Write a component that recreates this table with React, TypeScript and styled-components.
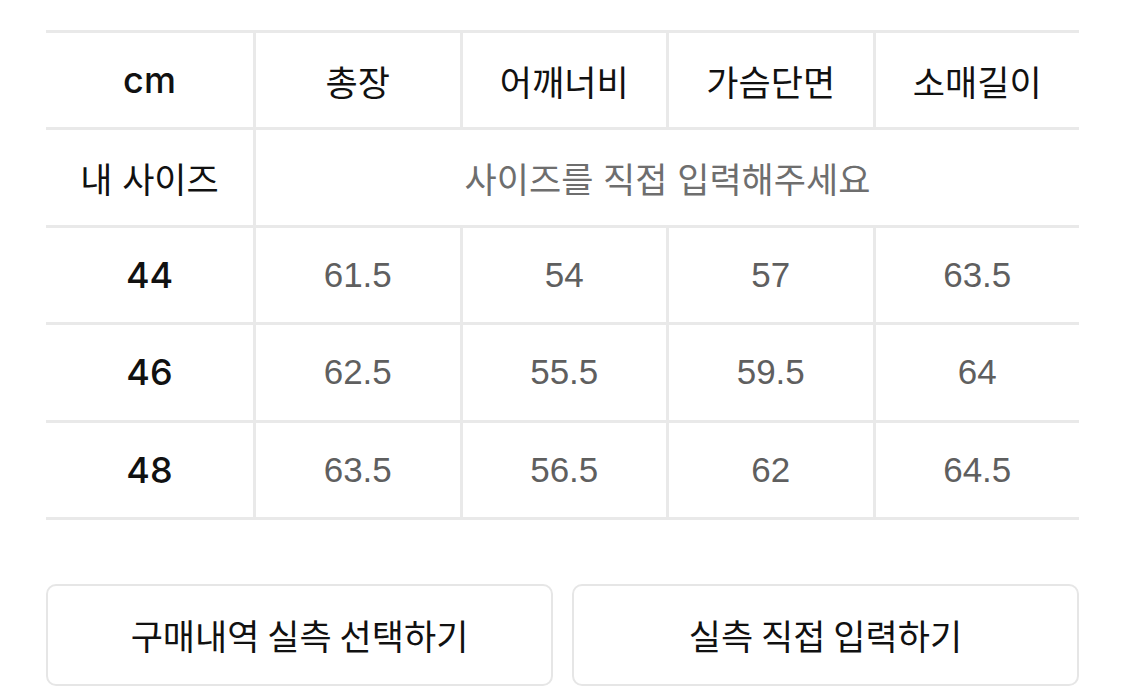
import React from "react";
import styled, { createGlobalStyle } from "styled-components";

const Global = createGlobalStyle`
  html, body { margin: 0; padding: 0; background: #ffffff; }
  body { font-family: "Liberation Sans", "Noto Sans CJK KR", sans-serif; }
`;

const Page = styled.div`
  width: 1125px;
  height: 691px;
  box-sizing: border-box;
  padding: 30px 46px 0 46px;
  display: flex;
  flex-direction: column;
  gap: 64px;
`;

const Table = styled.div`
  display: grid;
  grid-template-columns: 207px repeat(4, 1fr);
  grid-auto-rows: 94.4px;
  gap: 3px;
  padding: 3px 0;
  background: #e9e9e9;
`;

type Tone = "head" | "label" | "value" | "hint";

const Cell = styled.div<{ $span?: number; $tone?: Tone }>`
  background: #ffffff;
  display: flex;
  align-items: center;
  justify-content: center;
  grid-column: ${(p) => (p.$span ? `span ${p.$span}` : "auto")};
  font-family: ${(p) =>
    p.$tone === "label"
      ? `Inter, "Noto Sans CJK KR", sans-serif`
      : `"Liberation Sans", "Noto Sans CJK KR", sans-serif`};
  font-size: ${(p) => (p.$tone === "label" ? "36px" : "35px")};
  font-weight: ${(p) => (p.$tone === "label" ? 500 : 400)};
  color: ${(p) =>
    p.$tone === "value" ? "#5f5f5f" : p.$tone === "hint" ? "#6e6e6e" : "#111111"};
`;

const Buttons = styled.div`
  display: grid;
  grid-template-columns: 1fr 1fr;
  gap: 19px;
`;

const Button = styled.button`
  height: 102px;
  box-sizing: border-box;
  border: 2px solid #e6e6e6;
  border-radius: 10px;
  background: #ffffff;
  font-family: "Noto Sans CJK KR", sans-serif;
  font-size: 35px;
  font-weight: 400;
  color: #111111;
  padding: 0;
`;

const headers = ["총장", "어깨너비", "가슴단면", "소매길이"];
const rows: [string, string[]][] = [
  ["44", ["61.5", "54", "57", "63.5"]],
  ["46", ["62.5", "55.5", "59.5", "64"]],
  ["48", ["63.5", "56.5", "62", "64.5"]],
];

export default function App() {
  return (
    <>
      <Global />
      <Page>
        <Table>
          <Cell $tone="label">cm</Cell>
          {headers.map((h) => (
            <Cell key={h} $tone="head">
              {h}
            </Cell>
          ))}
          <Cell $tone="head">내 사이즈</Cell>
          <Cell $span={4} $tone="hint">
            사이즈를 직접 입력해주세요
          </Cell>
          {rows.map(([size, vals]) => (
            <React.Fragment key={size}>
              <Cell $tone="label">{size}</Cell>
              {vals.map((v, i) => (
                <Cell key={i} $tone="value">
                  {v}
                </Cell>
              ))}
            </React.Fragment>
          ))}
        </Table>
        <Buttons>
          <Button>구매내역 실측 선택하기</Button>
          <Button>실측 직접 입력하기</Button>
        </Buttons>
      </Page>
    </>
  );
}
